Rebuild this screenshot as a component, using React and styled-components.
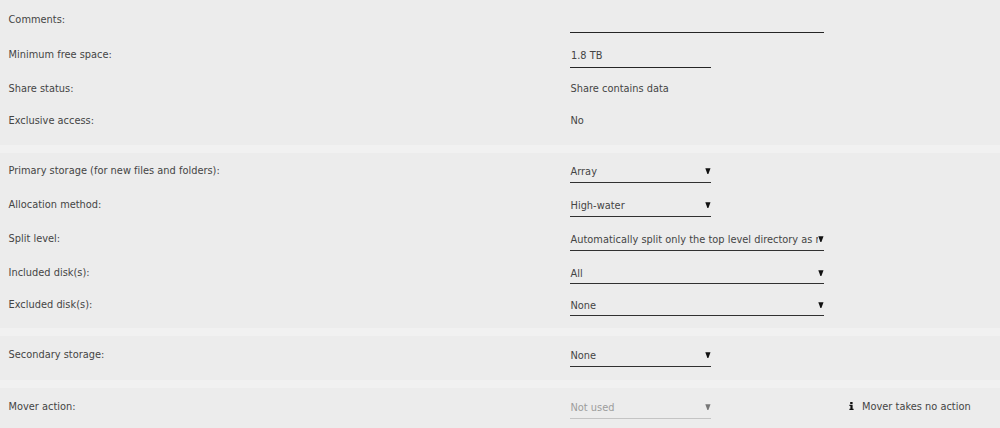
import React, { useState } from 'react';
import styled, { createGlobalStyle } from 'styled-components';


const GlobalStyle = createGlobalStyle`
  body {
    margin: 0;
    background-color: #f1f1f1;
    color: #444;
    font: 10.9px "DejaVu Sans Condensed", "DejaVu Sans", sans-serif;
    font-stretch: condensed;
    letter-spacing: 0.02px;
  }
`;

const Form = styled.form`
  display: flex;
  flex-direction: column;
  gap: 8px;
  height: 428px;
  overflow: hidden;
`;

const Section = styled.section`
  background-color: #ececec;
  padding-top: ${(props) => props.$top || 6}px;
  flex: ${(props) => (props.$fill ? '1' : 'none')};
`;

const Row = styled.div`
  display: grid;
  grid-template-columns: 561.5px 254px 1fr;
  padding-left: 8.5px;
  height: ${(props) => props.$height}px;
  align-items: start;
`;

const Label = styled.label`
  line-height: 24px;
  white-space: nowrap;
`;

const Value = styled.span`
  line-height: 24px;
  padding-left: 0.5px;
`;

const Input = styled.input`
  box-sizing: border-box;
  width: ${(props) => (props.$narrow ? 141 : 254)}px;
  height: 25px;
  padding: 1px 1px 0;
  border: none;
  border-bottom: 1px solid #252525;
  border-radius: 0;
  outline: none;
  background: transparent;
  color: inherit;
  font: inherit;
`;

const SelectBox = styled.div`
  box-sizing: border-box;
  display: flex;
  align-items: center;
  width: ${(props) => (props.$narrow ? 141 : 254)}px;
  height: ${(props) => (props.$tight ? 23 : 24)}px;
  padding-top: ${(props) => (props.$tight ? 2 : 0)}px;
  border-bottom: 1px solid ${(props) => (props.$disabled ? '#c4c4c4' : '#303030')};
  color: ${(props) => (props.$disabled ? '#9c9c9c' : 'inherit')};
`;

const SelectText = styled.span`
  flex: 1;
  min-width: 0;
  padding: 2px 0 0 0.5px;
  line-height: 20px;
  overflow: hidden;
  white-space: nowrap;
`;

const Arrow = styled.svg`
  flex: none;
  width: 6px;
  height: 6px;
  fill: ${(props) => (props.$disabled ? '#777' : '#111')};
`;

const Note = styled.span`
  display: flex;
  align-items: center;
  gap: 8px;
  height: 22px;
  padding-left: 25px;
  white-space: nowrap;
`;

const InfoIcon = styled.svg`
  width: 5px;
  height: 8px;
  fill: #111;
`;


function Select({ value, narrow, disabled, tight }) {
  return (
    <SelectBox $narrow={narrow} $disabled={disabled} $tight={tight}>
      <SelectText>{value}</SelectText>
      <Arrow viewBox="0 0 6 6" $disabled={disabled}>
        <path d="M0.3 0.2H5.5L3.4 6H2.4Z" />
      </Arrow>
    </SelectBox>
  );
}


const App = () => {

  const [share, setShare] = useState({ comments: '', floor: '1.8 TB' })

  function handleChange(event) {
    setShare((prev) => {
      return {
        ...prev,
        [event.target.name]: event.target.value
      }
    })
  }

  return (
    <>
      <GlobalStyle />
      <Form>
        <Section $top={8}>
          <Row $height={35}>
            <Label>Comments:</Label>
            <Input name="comments" value={share.comments} onChange={handleChange} />
          </Row>
          <Row $height={34}>
            <Label>Minimum free space:</Label>
            <Input $narrow name="floor" value={share.floor} onChange={handleChange} />
          </Row>
          <Row $height={32}>
            <Label>Share status:</Label>
            <Value>Share contains data</Value>
          </Row>
          <Row $height={36}>
            <Label>Exclusive access:</Label>
            <Value>No</Value>
          </Row>
        </Section>

        <Section>
          <Row $height={34}>
            <Label>Primary storage (for new files and folders):</Label>
            <Select narrow value="Array" />
          </Row>
          <Row $height={34}>
            <Label>Allocation method:</Label>
            <Select narrow value="High-water" />
          </Row>
          <Row $height={34}>
            <Label>Split level:</Label>
            <Select value="Automatically split only the top level directory as required" />
          </Row>
          <Row $height={32}>
            <Label>Included disk(s):</Label>
            <Select tight value="All" />
          </Row>
          <Row $height={35}>
            <Label>Excluded disk(s):</Label>
            <Select tight value="None" />
          </Row>
        </Section>

        <Section $top={7}>
          <Row $height={37}>
            <Label>Secondary storage:</Label>
            <Select narrow value="None" />
          </Row>
        </Section>

        <Section $top={7} $fill>
          <Row $height={33}>
            <Label>Mover action:</Label>
            <Select narrow disabled value="Not used" />
            <Note>
              <InfoIcon viewBox="0 0 5 8">
                <path d="M1.2 0H3.6V1.9H1.2ZM0.4 2.8H3.6V6.8H4.6V8H0.4V6.8H1.4V4H0.4Z" />
              </InfoIcon>
              Mover takes no action
            </Note>
          </Row>
        </Section>
      </Form>
    </>
  );
}


export default App;
